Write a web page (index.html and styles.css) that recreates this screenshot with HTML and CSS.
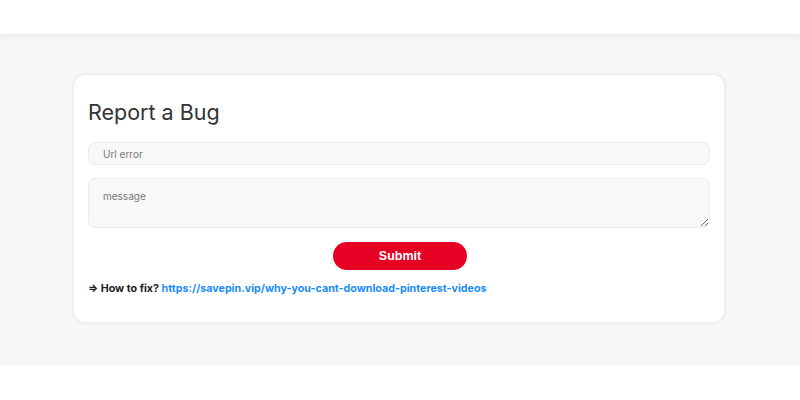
FILE: index.html
```html
<!DOCTYPE html>
<html>
<head>
<meta charset="utf-8">
<link rel="stylesheet" href="styles.css">
</head>
<body>
<header class="topbar"></header>
<main class="section">
  <div class="card">
    <h1 class="title">Report a Bug</h1>
    <form class="form">
      <input class="field" type="text" placeholder="Url error">
      <textarea class="field area" placeholder="message"></textarea>
      <div class="actions"><button class="submit" type="button">Submit</button></div>
    </form>
    <p class="fix">⇒ How to fix? <a href="#" class="link">https://savepin.vip/why-you-cant-download-pinterest-videos</a></p>
  </div>
</main>
</body>
</html>
```
FILE: styles.css
```css
* { box-sizing: border-box; }
html, body { margin: 0; padding: 0; background: #fff; }
body { font-family: Inter, "Noto Sans", sans-serif; }
.topbar { height: 34px; background: #fff; }
.section {
  height: 331px;
  background: #f6f7f9;
  box-shadow: inset 0 6px 6px -4px rgba(0,0,0,0.06);
  padding-top: 41px;
  display: flex;
  justify-content: center;
}
.card {
  width: 650px;
  height: 247px;
  margin-left: -2px;
  background: #fff;
  border-radius: 11px;
  box-shadow: 0 0 4px rgba(0,0,0,0.12);
  padding: 24px 13px 0 14px;
}
.title {
  margin: 0 0 16px;
  font-size: 21.5px;
  font-weight: 400;
  color: #333;
  line-height: 27px;
}
.form { display: flex; flex-direction: column; }
.field {
  width: 622px;
  height: 23px;
  background: #f8f8f8;
  border: 1px solid #ebebeb;
  border-radius: 7px;
  padding: 0 14px;
  font-family: Inter, sans-serif;
  font-size: 10px;
  color: #333;
  outline: none;
}
.field::placeholder { color: #777; }
.area {
  margin-top: 13px;
  height: 50px;
  padding-top: 11px;
  resize: vertical;
}
.actions { display: flex; justify-content: center; margin-top: 14px; }
.submit {
  width: 134px;
  height: 28px;
  border: none;
  border-radius: 14px;
  background: #e60023;
  color: #fff;
  font-family: "Liberation Sans", Arial, sans-serif;
  font-weight: 700;
  font-size: 12.5px;
  margin-left: 1px;
}
.fix {
  margin: 12px 0 0;
  font-family: Inter, sans-serif;
  font-weight: 700;
  font-size: 10.7px;
  color: #222;
}
.link { color: #1a8cff; text-decoration: none; }
```
